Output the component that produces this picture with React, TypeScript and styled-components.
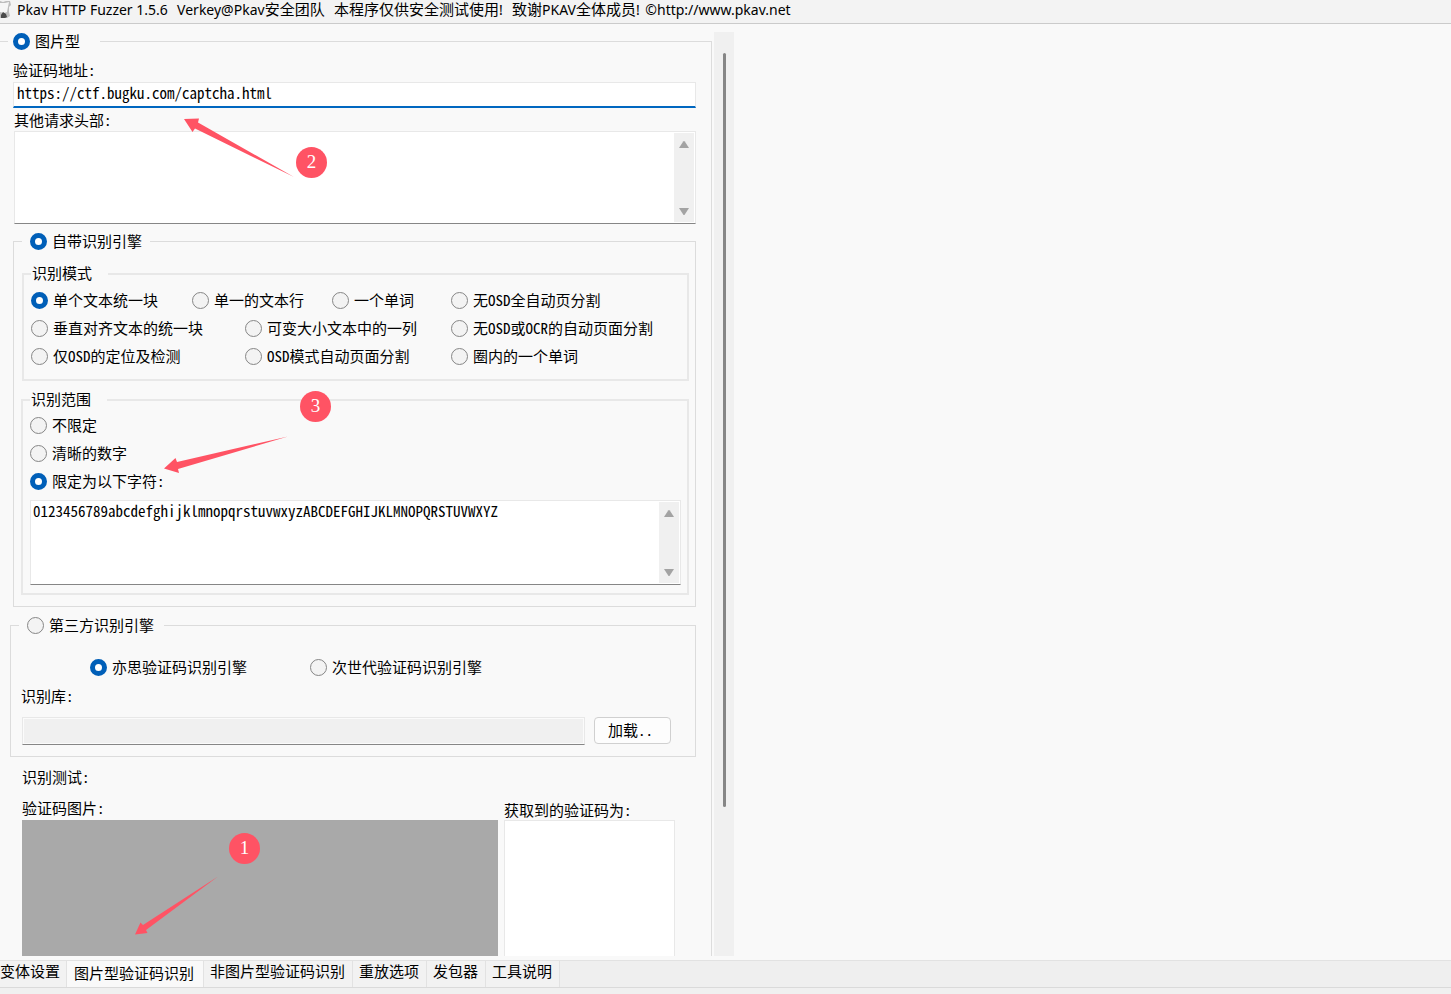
import React from "react";
import styled, { createGlobalStyle, css } from "styled-components";

const GlobalStyle = createGlobalStyle`
  *, *::before, *::after { box-sizing: border-box; }
  body {
    margin: 0;
    background: #f9f9f9;
    color: #000;
    font-family: "Noto Sans CJK SC", sans-serif;
    font-size: 15px;
    line-height: 20px;
    font-feature-settings: "hwid";
  }
  input, textarea, button {
    font: inherit;
    font-feature-settings: inherit;
    color: inherit;
  }
`;

const Window = styled.div`
  display: flex;
  flex-direction: column;
  height: 100vh;
  overflow: hidden;
`;

const TitleBar = styled.header`
  display: flex;
  align-items: center;
  height: 24px;
  padding-bottom: 5px;
  flex: none;
  gap: 6px;
  background: #f3f3f3;
  border-bottom: 1px solid #cbcbcb;
`;

const Title = styled.h1`
  display: flex;
  align-items: baseline;
  gap: 2px;
  margin: 0;
  font-family: "Noto Sans", "Noto Sans CJK SC", sans-serif;
  font-feature-settings: normal;
  font-size: 14px;
  font-weight: 400;
  line-height: 18px;
  white-space: pre;
`;

const Han = styled.span`
  font-size: 15px;
`;

const Workspace = styled.main`
  display: flex;
  flex: 1;
  min-height: 0;
  padding-bottom: 4px;
`;

const ScrollPane = styled.div`
  position: relative;
  display: flex;
  width: 734px;
  max-width: 100%;
  overflow: hidden;
`;

const PaneContent = styled.div`
  flex: 1;
  min-width: 0;
  padding-top: 7px;
`;

const PaneScrollbar = styled.div`
  display: flex;
  justify-content: center;
  width: 20px;
  margin: 8px 0 0 2px;
  padding: 21px 0 149px;
  background: #f0f0f0;
`;

const PaneThumb = styled.div`
  width: 3px;
  border-radius: 2px;
  background: #868686;
`;

const Group = styled.fieldset<{ $pad: string; $margin?: string; $soft?: boolean }>`
  min-width: 0;
  margin: ${(p) => p.$margin ?? "0"};
  padding: ${(p) => p.$pad};
  border: ${(p) => (p.$soft ? "2px solid #e8e8e8" : "1px solid #dcdcdc")};
`;

const PageGroup = styled(Group)`
  border-left: 0;
`;

const Legend = styled.legend<{ $indent: number; $pad: string }>`
  display: block;
  height: 20px;
  margin-left: ${(p) => p.$indent}px;
  padding: ${(p) => p.$pad};
`;

const TextLegend = styled.legend`
  display: block;
  height: 20px;
  padding: 0 16px 0 1px;
  line-height: 17px;
`;

const Choice = styled.label`
  display: flex;
  align-items: center;
  gap: 5px;
  white-space: nowrap;
`;

const Radio = styled.input.attrs({ type: "radio" })`
  appearance: none;
  flex: none;
  width: 17px;
  height: 17px;
  margin: 0;
  border: 1px solid #868686;
  border-radius: 50%;
  background: #f3f3f3;

  &:checked {
    border: 5px solid #005fb8;
    background: #fff;
  }
`;

const FieldLabel = styled.label<{ $indent?: number }>`
  display: block;
  padding-left: ${(p) => p.$indent ?? 0}px;
`;

const fieldFrame = css`
  border: 1px solid #e8e8e8;
  border-bottom: 1px solid #868686;
  background: #fff;
`;

const UrlInput = styled.input`
  display: block;
  width: 100%;
  height: 26px;
  margin: 2px 0;
  padding: 0 3px 4px;
  border: 1px solid #e8e8e8;
  border-bottom: 2px solid #0067c0;
  background: #fff;
  outline: none;
`;

const MemoFrame = styled.div<{ $height: number; $margin?: string }>`
  ${fieldFrame}
  display: flex;
  height: ${(p) => p.$height}px;
  margin: ${(p) => p.$margin ?? "0"};
`;

const MemoText = styled.textarea`
  flex: 1;
  min-width: 0;
  padding: 0 2px;
  border: 0;
  background: transparent;
  outline: none;
  overflow: hidden;
  resize: none;
`;

const MemoScrollbar = styled.div`
  display: flex;
  flex-direction: column;
  justify-content: space-between;
  align-items: center;
  width: 20px;
  margin: 1px 1px 1px 0;
  padding: 7px 0 6px;
  background: #f0f0f0;
`;

const ModeGrid = styled.div`
  display: grid;
  grid-template-columns: 161px 53px 87px 119px 1fr;
  grid-auto-rows: 28px;
`;

const Cell = styled.div<{ $span?: number }>`
  display: flex;
  grid-column: span ${(p) => p.$span ?? 1};
`;

const RangeList = styled.div`
  display: grid;
  grid-auto-rows: 28px;
  margin-bottom: 5px;
`;

const EngineRow = styled.div`
  display: flex;
  gap: 63px;
  padding: 22px 0 9px 69px;
`;

const LibraryRow = styled.div`
  display: flex;
  gap: 9px;
  padding: 11px 9px 0 1px;
`;

const LibraryInput = styled.input`
  ${fieldFrame}
  flex: 1;
  min-width: 0;
  height: 28px;
  padding: 0 4px;
  background: #f0f0f0;
  box-shadow: inset 0 0 0 1px #fbfbfb;
`;

const LoadButton = styled.button`
  width: 77px;
  height: 27px;
  padding: 0 13px 2px;
  border: 1px solid #d0d0d0;
  border-radius: 4px;
  background: #fdfdfd;
  line-height: 22px;
  text-align: left;
`;

const TestArea = styled.section`
  padding: 10px 21px 0 9px;
`;

const TestHeading = styled.h2`
  margin: 0 0 11px;
  font-size: 15px;
  font-weight: 400;
`;

const TestColumns = styled.div`
  display: flex;
  gap: 6px;
`;

const CaptchaColumn = styled.div`
  flex: 1;
`;

const ResultColumn = styled.div`
  width: 171px;
  padding-top: 2px;
  white-space: nowrap;
`;

const CaptchaPreview = styled.div`
  height: 180px;
  margin-top: 2px;
  background: #a9a9a9;
`;

const ResultBox = styled.textarea`
  ${fieldFrame}
  display: block;
  width: 100%;
  height: 180px;
  resize: none;
`;

const TabBar = styled.nav`
  display: flex;
  flex: none;
  height: 28px;
  border-top: 1px solid #e2e2e2;
  border-bottom: 1px solid #dadada;
  background: #efefef;
`;

const Tab = styled.button<{ $active?: boolean; $first?: boolean }>`
  height: 26px;
  padding: ${(p) => (p.$active ? "0 9px 2px 7px" : p.$first ? "0 6px 6px 0" : "0 7px 6px 6px")};
  border: 0;
  border-right: 1px solid #e2e2e2;
  background: ${(p) => (p.$active ? "#f9f9f9" : "#f2f2f2")};
  white-space: nowrap;
`;

const StatusStrip = styled.footer`
  flex: none;
  height: 6px;
  background: #f0f0f0;
`;

const Badge = styled.span<{ $x: number; $y: number }>`
  position: absolute;
  left: ${(p) => p.$x}px;
  top: ${(p) => p.$y}px;
  width: 31px;
  height: 31px;
  border-radius: 50%;
  background: #ff5364;
  color: #fff;
  font-family: "Liberation Serif", serif;
  font-feature-settings: normal;
  font-size: 19px;
  line-height: 30px;
  text-align: center;
`;

const ArrowLayer = styled.svg`
  position: absolute;
  left: 0;
  top: 0;
  pointer-events: none;
`;

const AppIcon = () => (
  <svg width="11" height="18" viewBox="0 0 11 18" aria-hidden="true">
    <path d="M0 1 L3 2 L6 1 L10 1 L11 5 L9 7 L9 12 L10 16 L7 18 L0 18 Z" fill="#bdbdbd" />
    <path d="M0 3 L5 3 L9 2 L8 7 L7 12 L4 13 L0 12 Z" fill="#f6f6f6" />
    <path d="M1 15 L3 12 L6 14 L7 17 L5 18 L1 18 Z" fill="#4a4a4a" />
  </svg>
);

const Triangle = ({ down = false }: { down?: boolean }) => (
  <svg width="12" height="9" viewBox="0 0 12 9" aria-hidden="true">
    <path
      d={down ? "M1 1 H11 L6.8 7.6 Q6 8.6 5.2 7.6 Z" : "M1 8 H11 L6.8 1.4 Q6 .4 5.2 1.4 Z"}
      fill="#a3a3a3"
    />
  </svg>
);

interface OptionProps {
  name: string;
  text: string;
  checked?: boolean;
}

const Option = ({ name, text, checked }: OptionProps) => (
  <Choice>
    <Radio name={name} defaultChecked={checked} />
    {text}
  </Choice>
);

interface MemoProps {
  id?: string;
  label?: string;
  height: number;
  margin?: string;
  value?: string;
}

const Memo = ({ id, label, height, margin, value }: MemoProps) => (
  <MemoFrame $height={height} $margin={margin}>
    <MemoText id={id} aria-label={label} defaultValue={value} spellCheck={false} />
    <MemoScrollbar>
      <Triangle />
      <Triangle down />
    </MemoScrollbar>
  </MemoFrame>
);

const modes = [
  { text: "单个文本统一块", span: 1, checked: true },
  { text: "单一的文本行", span: 2 },
  { text: "一个单词", span: 1 },
  { text: "无OSD全自动页分割", span: 1 },
  { text: "垂直对齐文本的统一块", span: 2 },
  { text: "可变大小文本中的一列", span: 2 },
  { text: "无OSD或OCR的自动页面分割", span: 1 },
  { text: "仅OSD的定位及检测", span: 2 },
  { text: "OSD模式自动页面分割", span: 2 },
  { text: "圈内的一个单词", span: 1 },
];

const tabs = ["变体设置", "图片型验证码识别", "非图片型验证码识别", "重放选项", "发包器", "工具说明"];

export default function App() {
  return (
    <Window>
      <GlobalStyle />
      <TitleBar>
        <AppIcon />
        <Title>
          <span>{"Pkav HTTP Fuzzer 1.5.6  "}</span>
          <span>Verkey@Pkav<Han>安全团队</Han>{"  "}</span>
          <span><Han>本程序仅供安全测试使用</Han>{"!  "}</span>
          <span><Han>致谢</Han>PKAV<Han>全体成员</Han>{"! "}</span>
          <span>©http://www.pkav.net</span>
        </Title>
      </TitleBar>

      <Workspace>
        <ScrollPane>
          <PaneContent>
            <PageGroup $pad="9px 15px 20px 13px">
              <Legend $indent={-5} $pad="0 20px 0 5px">
                <Option name="type" text="图片型" checked />
              </Legend>

              <FieldLabel htmlFor="url">验证码地址:</FieldLabel>
              <UrlInput id="url" defaultValue="https://ctf.bugku.com/captcha.html" spellCheck={false} />
              <FieldLabel htmlFor="headers" $indent={1}>其他请求头部:</FieldLabel>
              <Memo id="headers" height={93} margin="1px 0 0 1px" />

              <Group $margin="7px 0 0" $pad="13px 6px 11px 8px">
                <Legend $indent={0} $pad="0 8px 0 8px">
                  <Option name="engine" text="自带识别引擎" checked />
                </Legend>

                <Group $soft $pad="2px 0 9px 7px" $margin="0 0 9px">
                  <TextLegend>识别模式</TextLegend>
                  <ModeGrid>
                    {modes.map((m) => (
                      <Cell key={m.text} $span={m.span}>
                        <Option name="mode" text={m.text} checked={m.checked} />
                      </Cell>
                    ))}
                  </ModeGrid>
                </Group>

                <Group $soft $margin="0 0 0 -1px" $pad="1px 6px 8px 7px">
                  <TextLegend>识别范围</TextLegend>
                  <RangeList>
                    <Option name="range" text="不限定" />
                    <Option name="range" text="清晰的数字" />
                    <Option name="range" text="限定为以下字符:" checked />
                  </RangeList>
                  <Memo
                    label="限定字符"
                    height={85}
                    value="0123456789abcdefghijklmnopqrstuvwxyzABCDEFGHIJKLMNOPQRSTUVWXYZ"
                  />
                </Group>
              </Group>

              <Group $margin="8px 0 0 -3px" $pad="0 15px 11px 10px">
                <Legend $indent={-2} $pad="0 10px 0 8px">
                  <Option name="engine" text="第三方识别引擎" />
                </Legend>
                <EngineRow>
                  <Option name="vendor" text="亦思验证码识别引擎" checked />
                  <Option name="vendor" text="次世代验证码识别引擎" />
                </EngineRow>
                <FieldLabel htmlFor="library">识别库:</FieldLabel>
                <LibraryRow>
                  <LibraryInput id="library" disabled />
                  <LoadButton type="button">加载..</LoadButton>
                </LibraryRow>
              </Group>

              <TestArea>
                <TestHeading>识别测试:</TestHeading>
                <TestColumns>
                  <CaptchaColumn>
                    <span>验证码图片:</span>
                    <CaptchaPreview />
                  </CaptchaColumn>
                  <ResultColumn>
                    <FieldLabel htmlFor="result">获取到的验证码为:</FieldLabel>
                    <ResultBox id="result" />
                  </ResultColumn>
                </TestColumns>
              </TestArea>
            </PageGroup>
          </PaneContent>

          <PaneScrollbar>
            <PaneThumb />
          </PaneScrollbar>

          <ArrowLayer width="734" height="932" viewBox="0 24 734 932" fill="#ff5364" aria-hidden="true">
            <path d="M184 119 L199 118.500 L198 122.500 L294 177 L195 128.500 L192.500 132 Z" />
            <path d="M164 468.500 L175.500 458 L177 462 L288 436.500 L178 469 L179 473 Z" />
            <path d="M135 934.500 L140.500 922.500 L143 925 L218 876.500 L146 930 L147.500 933 Z" />
          </ArrowLayer>
          <Badge $x={296} $y={123}>2</Badge>
          <Badge $x={300} $y={367}>3</Badge>
          <Badge $x={229} $y={809}>1</Badge>
        </ScrollPane>
      </Workspace>

      <TabBar>
        {tabs.map((t, i) => (
          <Tab key={t} type="button" $active={i === 1} $first={i === 0}>
            {t}
          </Tab>
        ))}
      </TabBar>
      <StatusStrip />
    </Window>
  );
}
